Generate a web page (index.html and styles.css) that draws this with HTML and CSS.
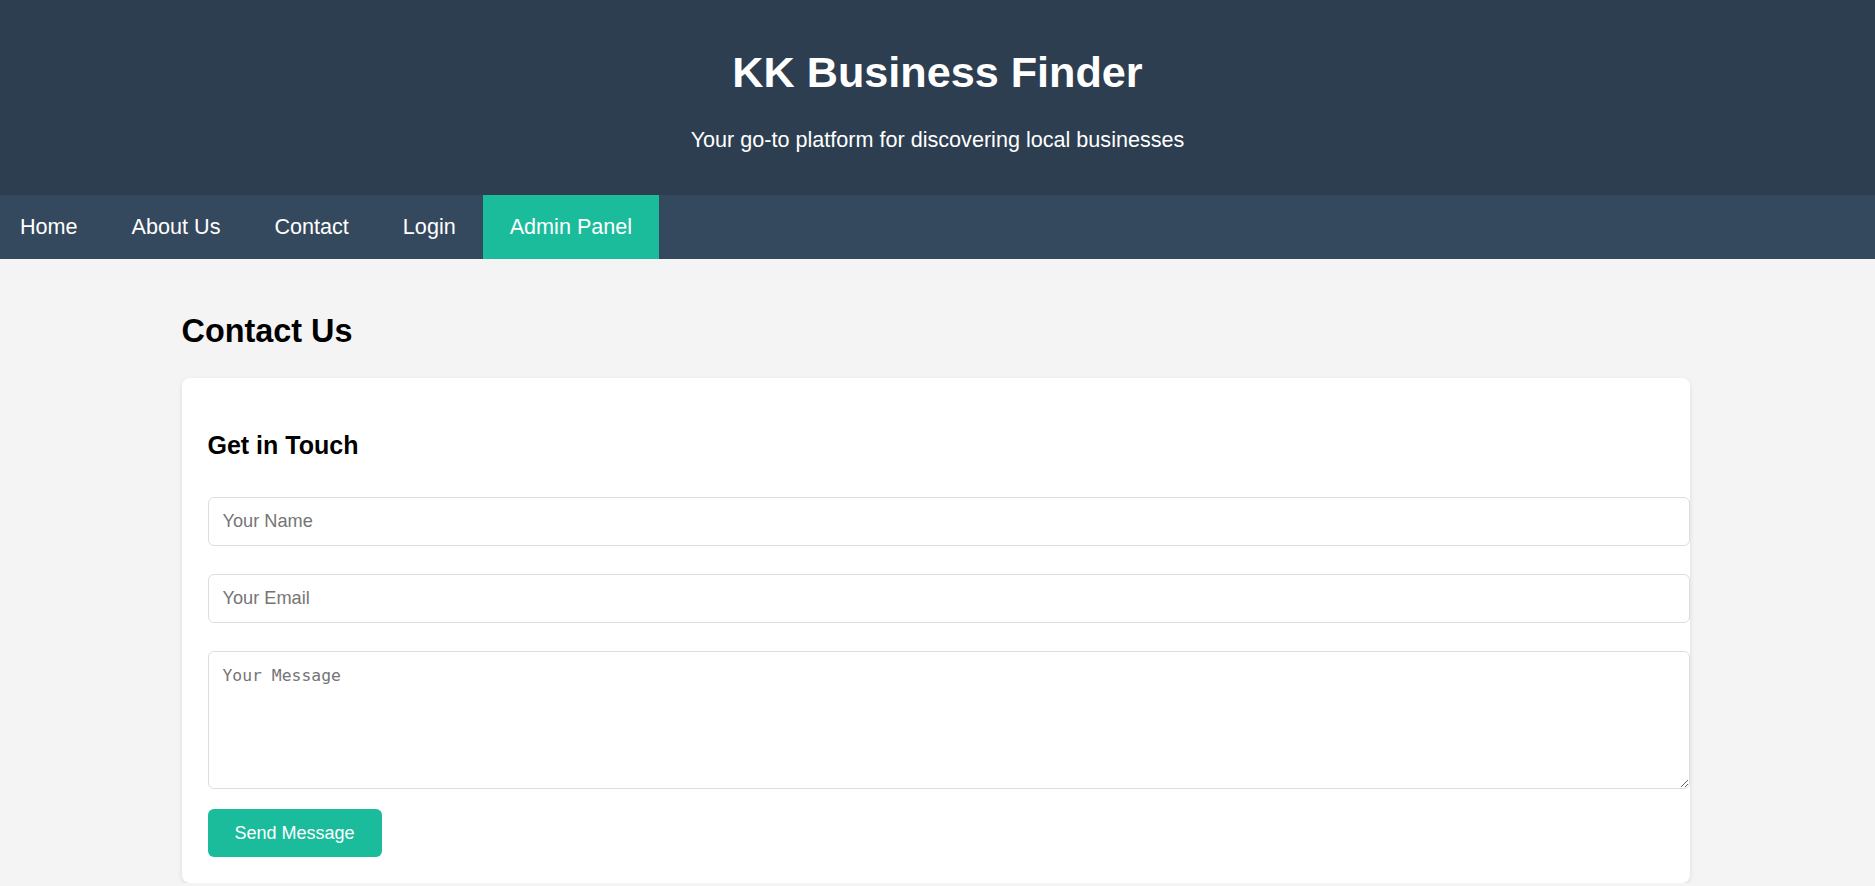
FILE: index.html
```html
<!DOCTYPE html>
<html lang="en">
<head>
<meta charset="utf-8">
<title>Contact Us - KK Business Finder</title>
<link rel="stylesheet" href="styles.css">
</head>
<body>
<header class="site-header">
  <h1 class="site-title">KK Business Finder</h1>
  <p class="site-tagline">Your go-to platform for discovering local businesses</p>
</header>
<nav class="site-nav">
  <a class="nav-link" href="#">Home</a>
  <a class="nav-link" href="#">About Us</a>
  <a class="nav-link" href="#">Contact</a>
  <a class="nav-link" href="#">Login</a>
  <a class="nav-link nav-link--active" href="#">Admin Panel</a>
</nav>
<main class="page">
  <h2 class="page-title">Contact Us</h2>
  <section class="card">
    <h3 class="card-title">Get in Touch</h3>
    <form class="contact-form">
      <input class="field" type="text" placeholder="Your Name">
      <input class="field" type="email" placeholder="Your Email">
      <textarea class="field field--area" placeholder="Your Message"></textarea>
      <button class="btn" type="button">Send Message</button>
    </form>
  </section>
</main>
</body>
</html>
```

FILE: styles.css
```css
* {
  margin: 0;
  padding: 0;
}

body {
  background: #f4f4f4;
  font-family: "Liberation Sans", Arial, sans-serif;
  color: #000;
}

.site-header {
  background: #2c3e50;
  color: #fff;
  text-align: center;
  padding: 48px 20px 42px;
  display: flex;
  flex-direction: column;
  align-items: center;
  gap: 30px;
}

.site-title {
  font-size: 43.2px;
  font-weight: bold;
  line-height: normal;
}

.site-tagline {
  font-size: 21.6px;
  line-height: normal;
}

.site-nav {
  background: #34495e;
  height: 64px;
  display: flex;
  align-items: stretch;
}

.nav-link {
  color: #fff;
  text-decoration: none;
  font-size: 21.6px;
  padding: 0 27px;
  display: flex;
  align-items: center;
}

.nav-link:first-child {
  padding-left: 20px;
}

.nav-link--active {
  background: #1abc9c;
}

.page {
  max-width: 1508px;
  margin: 0 calc(50% - 752px) 0 calc(50% - 756px);
  padding-top: 54px;
}

.page-title {
  font-size: 32.4px;
  font-weight: bold;
  line-height: normal;
  margin-bottom: 28px;
}

.card {
  background: #fff;
  border-radius: 8px;
  padding: 26px;
  box-shadow: 0 2px 5px rgba(0, 0, 0, 0.1);
}

.card-title {
  font-size: 25px;
  font-weight: bold;
  line-height: normal;
  margin-top: 27px;
  margin-bottom: 37px;
}

.contact-form {
  display: flex;
  flex-direction: column;
  align-items: flex-start;
}

.field {
  display: block;
  box-sizing: border-box;
  width: calc(100% + 26px);
  padding: 13px 14px;
  border: 1px solid #ddd;
  border-radius: 6px;
  background: #fff;
  font-family: "Liberation Sans", Arial, sans-serif;
  font-size: 18.2px;
  line-height: normal;
  margin-bottom: 28px;
  outline: none;
}

.field::placeholder {
  color: #757575;
}

.field--area {
  font-family: "DejaVu Sans Mono", monospace;
  font-size: 16.4px;
  padding: 14px;
  height: 138px;
  margin-bottom: 20px;
}

.btn {
  background: #1abc9c;
  color: #fff;
  border: none;
  border-radius: 6px;
  font-family: "Liberation Sans", Arial, sans-serif;
  font-size: 18px;
  line-height: normal;
  padding: 13.5px 27px;
}
```
